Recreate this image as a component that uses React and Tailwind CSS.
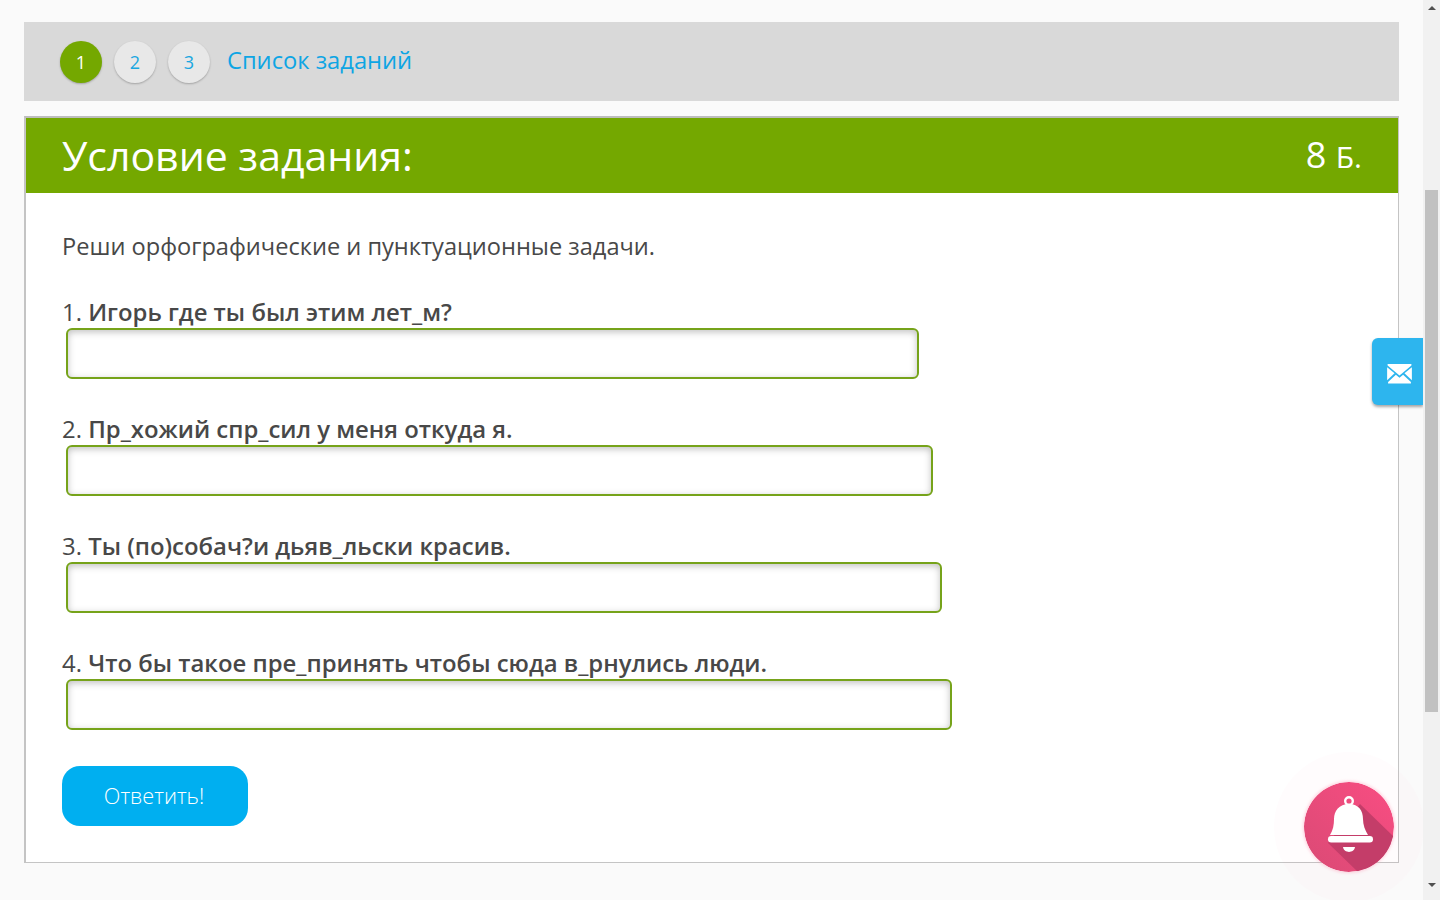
import React from 'react';

const questions = [
  { num: '1.', text: 'Игорь где ты был этим лет_м?', width: 'w-[853px]' },
  { num: '2.', text: 'Пр_хожий спр_сил у меня откуда я.', width: 'w-[867px]' },
  { num: '3.', text: 'Ты (по)собач?и дьяв_льски красив.', width: 'w-[876px]' },
  { num: '4.', text: 'Что бы такое пре_принять чтобы сюда в_рнулись люди.', width: 'w-[886px]' },
];

const Step = ({ label, active }) => (
  <div
    className={
      active
        ? 'w-[42px] h-[42px] rounded-full bg-[#74a800] text-white flex items-center justify-center text-lg shadow-[0_1px_2px_rgba(0,0,0,0.25)]'
        : 'w-[42px] h-[42px] rounded-full bg-[#e8e8e8] text-[#1aa7e0] flex items-center justify-center text-lg shadow-[0_1px_2px_rgba(0,0,0,0.25)]'
    }
  >
    {label}
  </div>
);

const App = () => {
  return (
    <div className="flex h-[900px] overflow-hidden bg-[#fafafa] font-['Open_Sans',sans-serif] text-[#484848]">
      <div className="flex-1 relative pl-6 pr-6 pt-[22px]">
        <div className="w-[1375px] h-[79px] bg-[#d9d9d9] flex items-center pl-9 gap-3">
          <Step label="1" active />
          <Step label="2" />
          <Step label="3" />
          <a className="ml-[5px] text-[23.7px] leading-none text-[#0ea5e4] -mt-0.5">Список заданий</a>
        </div>

        <div className="w-[1375px] h-[747px] mt-[15px] bg-white border border-[#c4c4c4] border-t-2 border-t-[#bdbdbd] border-l-2 border-l-[#c4c4c4]">
          <div className="h-[75px] bg-[#74a800] text-white flex items-center justify-between pl-9 pr-9">
            <h1 className="text-[41px] leading-none">Условие задания:</h1>
            <div className="text-[36px] leading-none -mt-0.5">
              8 <span className="text-[30px]">Б.</span>
            </div>
          </div>

          <div className="pl-9 pt-[37px]">
            <p className="text-[23.6px] leading-[32px]">Реши орфографические и пунктуационные задачи.</p>
            <div className="mt-[35px] flex flex-col gap-[35px]">
              {questions.map((q) => (
                <div key={q.num}>
                  <div className="text-[23.9px] leading-[30px] h-[31px]">
                    {q.num} <span className="font-semibold">{q.text}</span>
                  </div>
                  <input
                    type="text"
                    className={`block ml-1 h-[51px] ${q.width} bg-white border-2 border-[#76a31a] rounded-[6px] outline-none shadow-[inset_0_2px_7px_rgba(0,0,0,0.25)]`}
                  />
                </div>
              ))}
            </div>
            <button className="mt-[36px] w-[186px] h-[60px] rounded-[18px] bg-[#00aff0] text-white text-[21.7px] font-light pr-0.5">
              Ответить!
            </button>
          </div>
        </div>

        {/* mail tab */}
        <div className="absolute top-[338px] right-0 w-[51px] h-[67px] bg-[#2db5ee] rounded-l-[6px] shadow-[0_2px_3px_rgba(0,0,0,0.35)] flex items-center justify-center pl-[3px] pt-[4px]">
          <svg width="25" height="20" viewBox="0 0 26 21" fill="white">
            <path d="M0.5 1.5 L13 12 L25.5 1.5 V0 H0.5 Z" />
            <path d="M0 3.5 V17 L7.8 9.8 Z" />
            <path d="M26 3.5 V17 L18.2 9.8 Z" />
            <path d="M1 20.5 H25 V19 L16.8 11.2 L13 14.4 L9.2 11.2 L1 19 Z" />
          </svg>
        </div>

        {/* notification bell */}
        <div className="absolute top-[752px] left-[1274px] w-[150px] h-[150px] rounded-full bg-[rgba(255,80,130,0.02)] flex items-center justify-center">
          <div className="w-[90px] h-[90px] rounded-full overflow-hidden shadow-[0_0_3px_1px_rgba(255,150,180,0.4)]">
            <svg width="90" height="90" viewBox="0 0 90 90">
              <defs>
                <linearGradient id="bellBg" x1="0" y1="1" x2="1" y2="0">
                  <stop offset="0" stopColor="#da4a75" />
                  <stop offset="1" stopColor="#f94d82" />
                </linearGradient>
              </defs>
              <circle cx="45" cy="45" r="45" fill="url(#bellBg)" />
              <path d="M56 22 L90 55 V90 H54 L24 61 Z" fill="#c43d69" />
              <circle cx="45" cy="19" r="3.8" fill="none" stroke="white" strokeWidth="2.4" />
              <path d="M45 22 C35 22 30 29 30 37 C30 43 29 48 26 53 H64 C61 48 59 43 59 37 C59 29 55 22 45 22 Z" fill="white" />
              <rect x="24" y="54" width="45" height="6.5" rx="3.2" fill="white" />
              <path d="M39 65 H51 C50 71.5 40 71.5 39 65 Z" fill="white" />
            </svg>
          </div>
        </div>
      </div>

      {/* scrollbar */}
      <div className="w-[17px] shrink-0 bg-[#f1f1f1] flex flex-col items-center relative">
        <div className="mt-[6px] w-0 h-0 border-l-[4px] border-r-[4px] border-b-[4px] border-l-transparent border-r-transparent border-b-[#505050]" />
        <div className="mt-[180px] w-[13px] h-[522px] bg-[#c1c1c1]" />
        <div className="mt-[171px] w-0 h-0 border-l-[4px] border-r-[4px] border-t-[4px] border-l-transparent border-r-transparent border-t-[#505050]" />
      </div>
    </div>
  );
};

export default App;
